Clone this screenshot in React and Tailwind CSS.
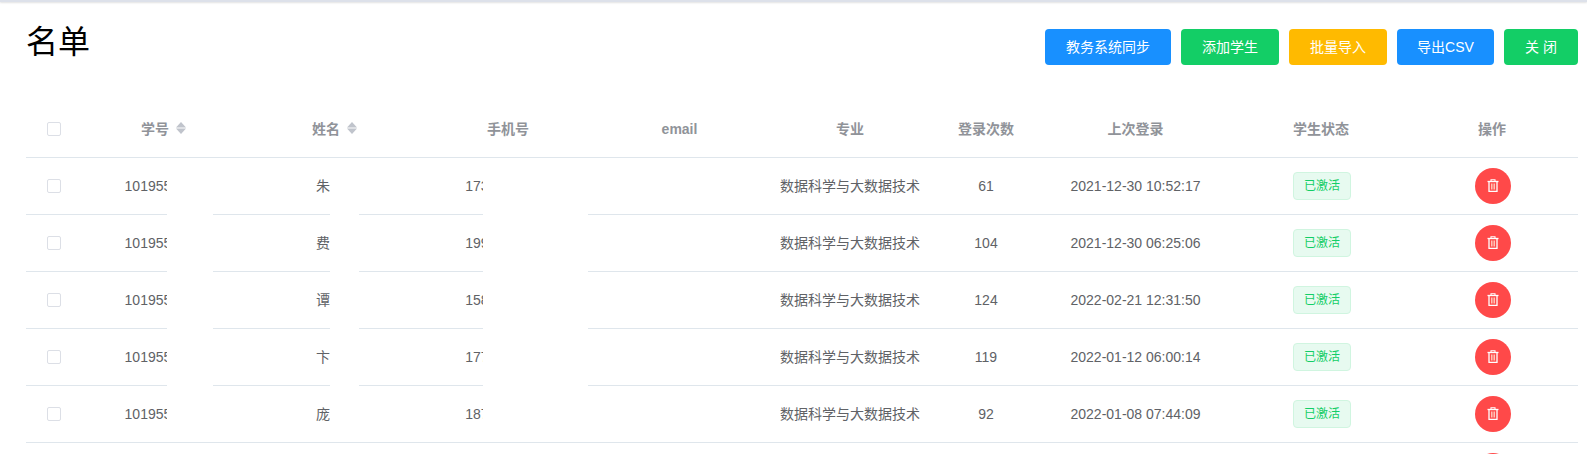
const students = [
  { id: '1019551234', name: '朱某', phone: '17300000000', logins: 61, last: '2021-12-30 10:52:17' },
  { id: '1019551235', name: '费某', phone: '19900000000', logins: 104, last: '2021-12-30 06:25:06' },
  { id: '1019551236', name: '谭某', phone: '15800000000', logins: 124, last: '2022-02-21 12:31:50' },
  { id: '1019551237', name: '卞某', phone: '17700000000', logins: 119, last: '2022-01-12 06:00:14' },
  { id: '1019551238', name: '庞某', phone: '18700000000', logins: 92, last: '2022-01-08 07:44:09' },
]

function Checkbox() {
  return <span className="block h-[14px] w-[14px] rounded-[2px] border border-[#dcdfe6] bg-white" />
}

function SortCaret() {
  return (
    <svg className="ml-[7px] inline-block align-[-1px]" width="10" height="14" viewBox="0 0 10 14">
      <path d="M5 1 L10 6.5 L0 6.5 Z" fill="#c0c4cc" />
      <path d="M0 7.5 L10 7.5 L5 13 Z" fill="#c0c4cc" />
    </svg>
  )
}

function TrashIcon() {
  return (
    <svg width="12" height="13" viewBox="0 0 12 13" fill="none">
      <path d="M4 2V0.7h4V2" stroke="#fff" strokeWidth="1.1" />
      <path d="M0.5 2.5h11" stroke="#fff" strokeWidth="1.3" />
      <path d="M2 3v9.3h8V3" stroke="#fff" strokeWidth="1.3" />
      <path d="M4.8 4.5v6M7.2 4.5v6" stroke="#ffd9c9" strokeWidth="1.3" />
    </svg>
  )
}

function DeleteButton() {
  return (
    <button className="ml-[2px] inline-flex h-[36px] w-[36px] items-center justify-center rounded-full bg-[#ff4949] align-middle">
      <TrashIcon />
    </button>
  )
}

function Button({ color, width, children }) {
  return (
    <button className={`h-[36px] rounded-[4px] text-center text-[14px] text-white ${color} ${width}`}>
      {children}
    </button>
  )
}

export default function App() {
  return (
    <main className="relative h-[454px] overflow-hidden bg-white font-['Liberation_Sans','Noto_Sans_CJK_SC',sans-serif] text-[14px] text-[#606266]">
      <div className="h-[2px] bg-[#dde1ea] shadow-[0_1px_2px_rgba(0,0,0,0.12)]" />
      <div className="pl-[26px] pr-[9px]">
        <header className="flex h-[98px] items-start justify-between">
          <h1 className="m-0 mt-[20px] text-[32px] font-normal leading-[40px] text-black">名单</h1>
          <div className="mt-[27px] flex gap-[10px]">
            <Button color="bg-[#1890ff]" width="w-[126px]">教务系统同步</Button>
            <Button color="bg-[#13ce66]" width="w-[98px]">添加学生</Button>
            <Button color="bg-[#ffba00]" width="w-[98px]">批量导入</Button>
            <Button color="bg-[#1890ff]" width="w-[97px]">导出CSV</Button>
            <Button color="bg-[#13ce66]" width="w-[74px]">关 闭</Button>
          </div>
        </header>

        <div className="relative">
          <table className="w-[1552px] table-fixed border-collapse">
            <colgroup>
              <col className="w-[56px]" />
              <col className="w-[163px]" />
              <col className="w-[176px]" />
              <col className="w-[174px]" />
              <col className="w-[168px]" />
              <col className="w-[174px]" />
              <col className="w-[98px]" />
              <col className="w-[201px]" />
              <col className="w-[170px]" />
              <col className="w-[172px]" />
            </colgroup>
            <thead>
              <tr className="h-[57px] border-b border-[#dfe6ec] text-center text-[14px] font-bold text-[#909399]">
                <th className="pl-[21px] pt-[2px]"><Checkbox /></th>
                <th className="pt-[2px]">学号<SortCaret /></th>
                <th className="pl-[3px] pt-[2px]">姓名<SortCaret /></th>
                <th className="pt-[2px]">手机号</th>
                <th className="pl-[1px] pt-[2px]">email</th>
                <th className="pt-[2px]">专业</th>
                <th className="pt-[2px]">登录次数</th>
                <th className="pt-[2px]">上次登录</th>
                <th className="pt-[2px]">学生状态</th>
                <th className="pt-[2px]">操作</th>
              </tr>
            </thead>
            <tbody>
              {students.map((s) => (
                <tr key={s.id} className="h-[57px] border-b border-[#dfe6ec] text-center">
                  <td className="pl-[21px]"><Checkbox /></td>
                  <td className="pt-[2px]">{s.id}</td>
                  <td className="pr-[6px] pt-[2px]">{s.name}</td>
                  <td className="pt-[2px]">{s.phone}</td>
                  <td />
                  <td className="whitespace-nowrap pt-[2px]">数据科学与大数据技术</td>
                  <td className="pt-[2px]">{s.logins}</td>
                  <td className="pt-[2px]">{s.last}</td>
                  <td className="pl-[2px]">
                    <span className="inline-block h-[28px] rounded-[4px] border border-[#d0f5e0] bg-[#e7faf0] px-[10px] text-[12px] leading-[26px] text-[#13ce66]">已激活</span>
                  </td>
                  <td><DeleteButton /></td>
                </tr>
              ))}
              {/* next row only shows the top of its delete button above the fold */}
              <tr className="h-[57px] text-center">
                <td colSpan={9} />
                <td><DeleteButton /></td>
              </tr>
            </tbody>
          </table>

          {/* redaction strips painted over the id, name and phone columns */}
          <div className="absolute left-[141px] top-[70px] h-[265px] w-[46px] bg-white" />
          <div className="absolute left-[304px] top-[70px] h-[265px] w-[29px] bg-white" />
          <div className="absolute left-[457px] top-[70px] h-[265px] w-[105px] bg-white" />
        </div>
      </div>
    </main>
  )
}
